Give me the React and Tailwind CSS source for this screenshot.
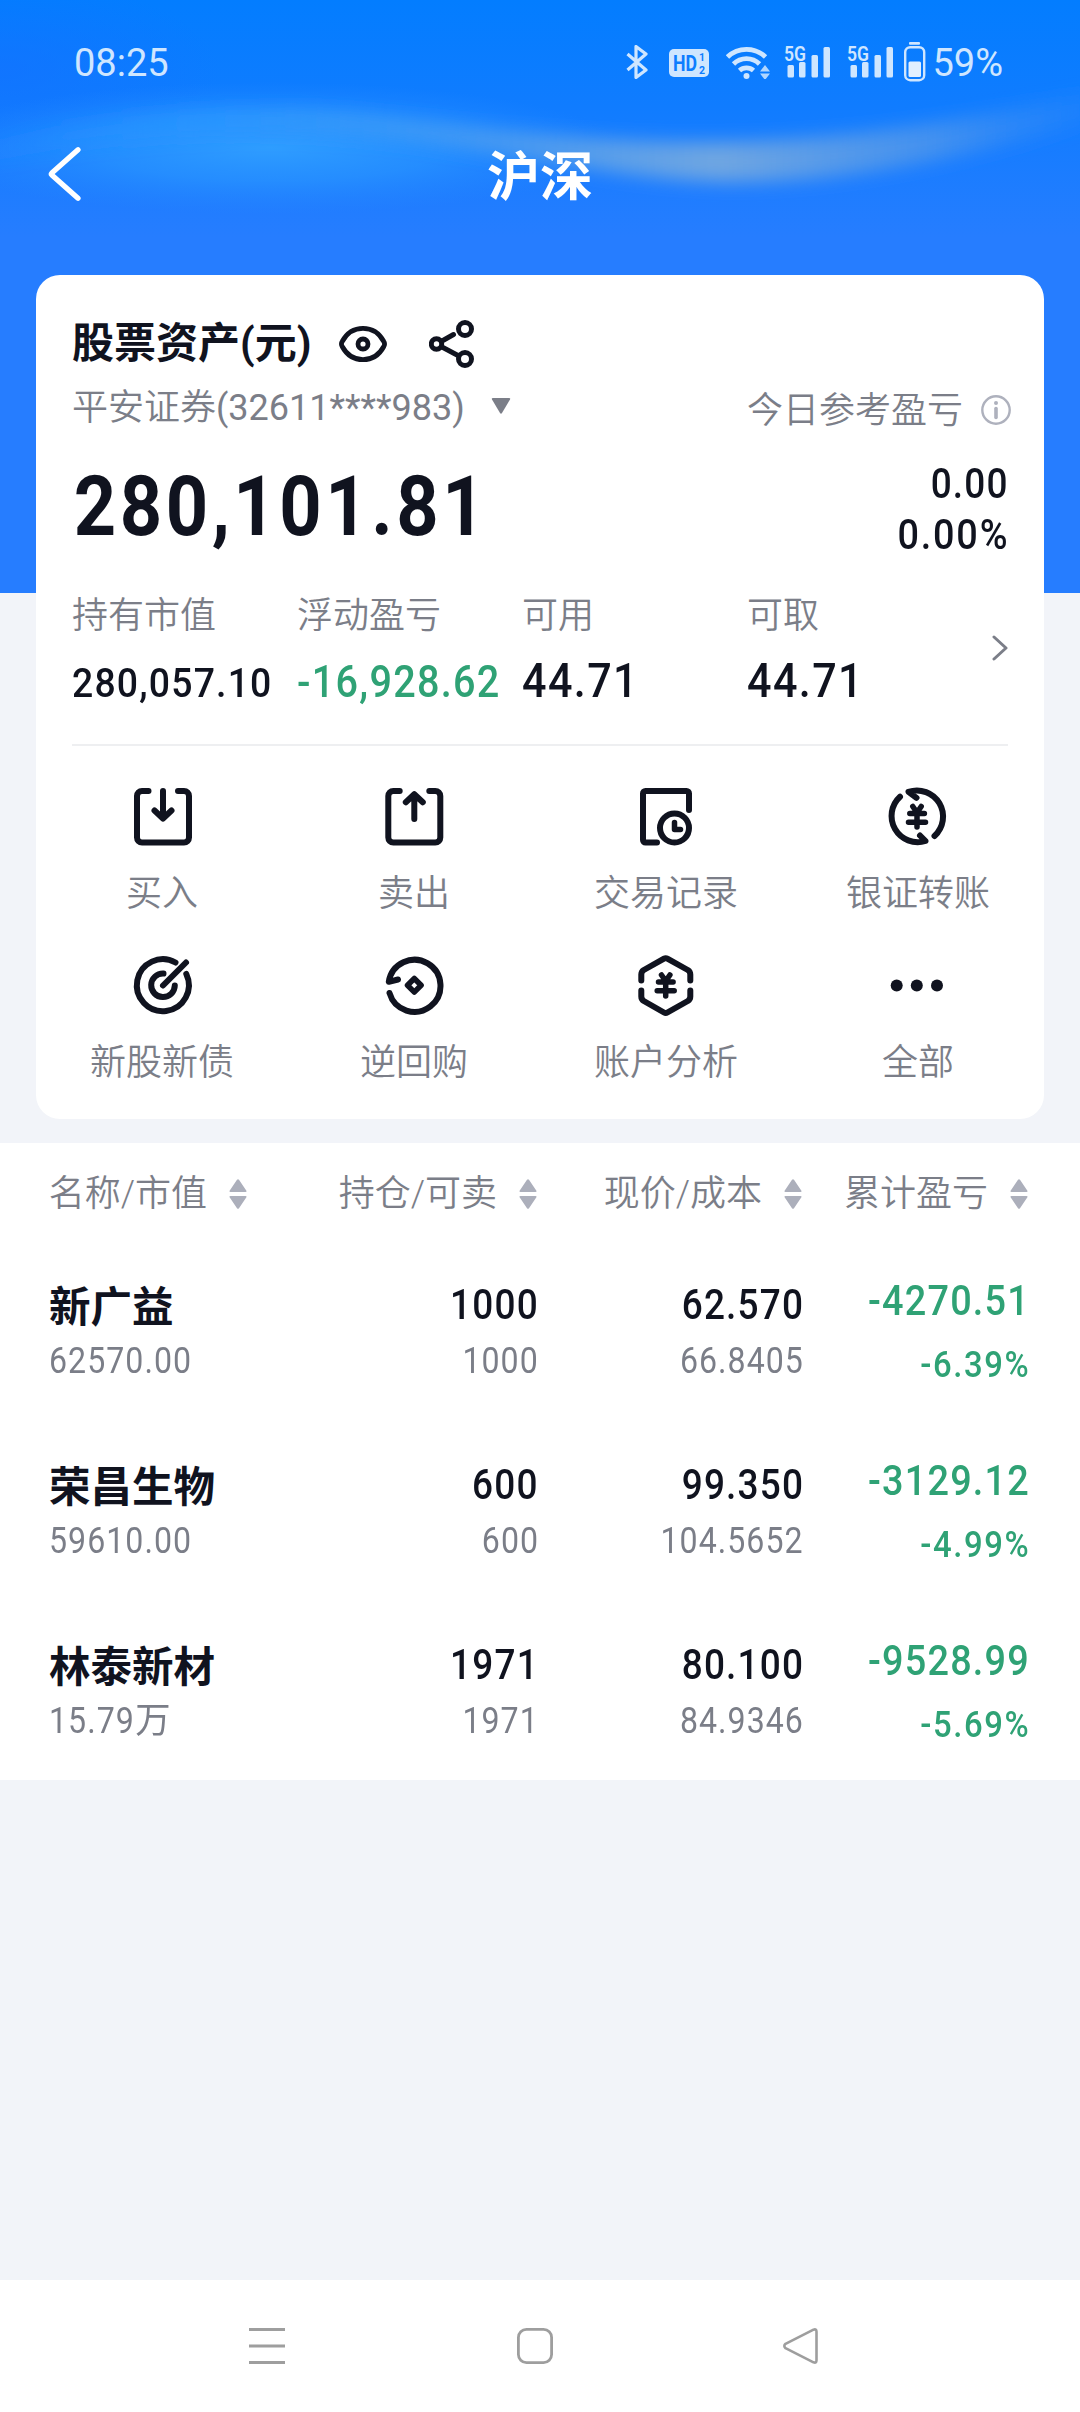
import * as React from "react";
import { clsx } from "clsx";

const accountStats = [
  { label: "持有市值", value: "280,057.10", wide: true, className: "text-[41.5px]" },
  { label: "浮动盈亏", value: "-16,928.62", wide: true, className: "text-[44px] text-[#2fa275]" },
  { label: "可用", value: "44.71", className: "text-[49px]" },
  { label: "可取", value: "44.71", className: "text-[49px]" },
];

const columns = [
  { label: "名称/市值", width: "w-[247px]" },
  { label: "持仓/可卖", width: "w-[290px]" },
  { label: "现价/成本", width: "w-[265px]" },
  { label: "累计盈亏", width: "w-[226px]" },
];

const holdings = [
  {
    name: "新广益",
    marketValue: "62570.00",
    position: "1000",
    sellable: "1000",
    price: "62.570",
    cost: "66.8405",
    profit: "-4270.51",
    rate: "-6.39%",
  },
  {
    name: "荣昌生物",
    marketValue: "59610.00",
    position: "600",
    sellable: "600",
    price: "99.350",
    cost: "104.5652",
    profit: "-3129.12",
    rate: "-4.99%",
  },
  {
    name: "林泰新材",
    marketValue: "15.79",
    unit: "万",
    position: "1971",
    sellable: "1971",
    price: "80.100",
    cost: "84.9346",
    profit: "-9528.99",
    rate: "-5.69%",
  },
];

// Condensed figures with open spacing, used for every amount
function Num({ className, align = "left", wide, loose, children }) {
  return (
    <span
      className={clsx(
        "inline-block whitespace-nowrap",
        wide ? "scale-x-[0.9]" : "scale-x-[0.88]",
        loose ? "tracking-[0.048em]" : "tracking-[0.032em]",
        align === "right" ? "origin-right" : "origin-left",
        className
      )}
    >
      {children}
    </span>
  );
}

// ---------- Action icons ----------
function ActionSvg({ children }) {
  return (
    <svg
      viewBox="0 0 60 60"
      className="size-[60px] overflow-visible"
      fill="none"
      stroke="currentColor"
      strokeWidth="6"
      strokeLinecap="round"
      strokeLinejoin="round"
    >
      {children}
    </svg>
  );
}

const BuyIcon = () => (
  <ActionSvg>
    <path d="M16.5 4H10a5 5 0 0 0-5 5v41.500a5 5 0 0 0 5 5h42a5 5 0 0 0 5-5V9a5 5 0 0 0-5-5h-6" />
    <path d="M31 4v27M22.500 23.500l8.500 8 8.500-8" />
  </ActionSvg>
);

const SellIcon = () => (
  <ActionSvg>
    <path d="M15.700 4H9.300a5 5 0 0 0-5 5v41.500a5 5 0 0 0 5 5h42a5 5 0 0 0 5-5V9a5 5 0 0 0-5-5h-6" />
    <path d="M30.300 32V7.500M21.800 15.200l8.500-8 8.500 8" />
  </ActionSvg>
);

const RecordIcon = () => (
  <ActionSvg>
    <path d="M21 55.500H9.500a2.500 2.500 0 0 1-2.500-2.500V6.500A2.500 2.500 0 0 1 9.500 4h41A2.500 2.500 0 0 1 53 6.500V23" />
    <circle cx="38.500" cy="41" r="14.500" />
    <path d="M38.500 35.500v7h6" strokeWidth="5.500" />
  </ActionSvg>
);

const TransferIcon = () => (
  <ActionSvg>
    <path d="M12 9.700A26.200 26.200 0 0 0 37.500 54L32 48.500" />
    <path d="M46.500 49A26.200 26.200 0 0 0 20.500 4.800l8 6" />
    <path d="M24.800 19.500l4.200 6 4.200-6M21.800 26.500h14.600M20.500 35.300h17M29 26v14" strokeWidth="5.500" />
  </ActionSvg>
);

const TargetIcon = () => (
  <ActionSvg>
    <path d="M43.500 6.500A26 26 0 1 0 54.300 18" />
    <path d="M31.500 17.500A11.800 11.800 0 1 0 42.800 29.500" />
    <path d="M31 29.500L54 6.500" />
  </ActionSvg>
);

const RepoIcon = () => (
  <ActionSvg>
    <path d="M14 23.500L4.800 25.800A26 26 0 1 1 5.500 37" />
    <path d="M30.300 22.500l6.800 6.800-6.800 6.800-6.800-6.800z" strokeWidth="5.500" />
  </ActionSvg>
);

const AnalysisIcon = () => (
  <ActionSvg>
    <path d="M5.300 24.500V18.500Q5.300 15.600 7.800 14L28 2.700q1.700-1 3.400 0L51.800 14q2.500 1.600 2.500 4.500v6" />
    <path d="M5.300 34.500v6q0 2.900 2.500 4.500L28 56.500q1.700 1 3.400 0L51.800 45q2.500-1.600 2.500-4.500v-6" />
    <path d="M25.500 19l4.200 6 4.200-6M22.500 26h14.600M21.200 34.700h17M29.700 26v14" strokeWidth="5.500" />
  </ActionSvg>
);

const MoreIcon = () => (
  <ActionSvg>
    <g fill="currentColor" stroke="none">
      <circle cx="8.700" cy="29.500" r="6" />
      <circle cx="28.800" cy="29.500" r="6" />
      <circle cx="49" cy="29.500" r="6" />
    </g>
  </ActionSvg>
);

const actions = [
  { label: "买入", Icon: BuyIcon },
  { label: "卖出", Icon: SellIcon },
  { label: "交易记录", Icon: RecordIcon },
  { label: "银证转账", Icon: TransferIcon },
  { label: "新股新债", Icon: TargetIcon },
  { label: "逆回购", Icon: RepoIcon },
  { label: "账户分析", Icon: AnalysisIcon },
  { label: "全部", Icon: MoreIcon },
];

// ---------- Header ----------
function HeaderBackdrop() {
  return (
    <svg
      viewBox="0 0 1080 593"
      preserveAspectRatio="none"
      className="absolute inset-0 h-full w-full"
    >
      <defs>
        <linearGradient id="sky" x1="0" y1="0" x2="0" y2="1">
          <stop offset="0" stopColor="#037dff" />
          <stop offset="0.180" stopColor="#107cff" />
          <stop offset="0.400" stopColor="#267dff" />
          <stop offset="1" stopColor="#267dff" />
        </linearGradient>
        <radialGradient id="corner">
          <stop offset="0" stopColor="#1470ff" stopOpacity="0.600" />
          <stop offset="1" stopColor="#1470ff" stopOpacity="0" />
        </radialGradient>
        <radialGradient id="glow">
          <stop offset="0" stopColor="#2f9dff" />
          <stop offset="0.500" stopColor="#2b98ff" stopOpacity="0.600" />
          <stop offset="1" stopColor="#268aff" stopOpacity="0" />
        </radialGradient>
        <linearGradient id="ribbon" x1="0" y1="0" x2="1" y2="0">
          <stop offset="0" stopColor="#2594ff" stopOpacity="0.100" />
          <stop offset="0.200" stopColor="#2d9aff" stopOpacity="0.600" />
          <stop offset="0.450" stopColor="#4d9df0" stopOpacity="0.850" />
          <stop offset="0.660" stopColor="#74a8e0" stopOpacity="0.950" />
          <stop offset="0.850" stopColor="#5298ea" stopOpacity="0.750" />
          <stop offset="1" stopColor="#328bf8" stopOpacity="0.200" />
        </linearGradient>
        <filter id="soft" x="-10%" y="-50%" width="120%" height="200%">
          <feGaussianBlur stdDeviation="9" />
        </filter>
      </defs>
      <rect width="1080" height="593" fill="url(#sky)" />
      <ellipse cx="0" cy="70" rx="220" ry="90" fill="url(#corner)" />
      <ellipse cx="270" cy="148" rx="350" ry="66" fill="url(#glow)" />
      <path
        d="M-20 145C90 112 250 102 370 116S560 137 650 141S900 140 1100 88V120C960 160 840 182 740 182S560 162 440 144S160 124-20 164Z"
        fill="url(#ribbon)"
        filter="url(#soft)"
      />
    </svg>
  );
}

function SignalIcon({ className }) {
  return (
    <svg viewBox="0 -5 46 44" className={clsx("h-[44px] w-[46px]", className)} fill="currentColor">
      <text x="0" y="15.500" fontSize="20.500" fontWeight="600" textLength="22" lengthAdjust="spacingAndGlyphs">
        5G
      </text>
      <rect x="3.500" y="20" width="6.500" height="12.500" rx="1.500" />
      <rect x="15" y="17" width="6.500" height="15.500" rx="1.500" />
      <rect x="27.500" y="10" width="6.500" height="22.500" rx="1.500" />
      <rect x="39.500" y="2" width="6.500" height="30.500" rx="1.500" />
    </svg>
  );
}

function StatusBar() {
  return (
    <div className="flex h-[124px] items-center pl-[74px] text-[38px] text-[#cfe6ff]">
      <span className="pt-0.5">08:25</span>
      <div className="ml-auto flex items-center pr-[77px]">
        <svg viewBox="0 0 22 34" className="h-[34px] w-[22px]" fill="none" stroke="currentColor" strokeWidth="3.200" strokeLinejoin="round">
          <path d="M1.500 9L20 25l-10 7.500v-31L20 9 1.500 25" />
        </svg>
        <svg viewBox="0 0 40 28" className="mt-0.5 ml-[21px] h-7 w-10">
          <rect width="40" height="28" rx="5" fill="currentColor" />
          <g fill="#0d7dff" fontWeight="700">
            <text x="4" y="22" fontSize="22.500" textLength="24" lengthAdjust="spacingAndGlyphs">HD</text>
            <text x="30" y="11.500" fontSize="10.500">1</text>
            <text x="30" y="25.300" fontSize="10.500">2</text>
          </g>
        </svg>
        <svg viewBox="0 0 46 34" className="ml-[17px] h-[34px] w-[46px]" fill="none" stroke="currentColor" strokeWidth="4.800">
          <path d="M1.500 12a27.500 27.500 0 0 1 38 0" />
          <path d="M7.500 19a18.500 18.500 0 0 1 26 0" />
          <path d="M13.500 25.500a10.500 10.500 0 0 1 14 0" />
          <circle cx="20.500" cy="31" r="3" fill="currentColor" stroke="none" />
          <path d="M34 26.500l5-6.500 5 6.500zM34 28.500l5 6.500 5-6.500z" fill="currentColor" stroke="none" opacity="0.850" />
        </svg>
        <SignalIcon className="ml-3" />
        <SignalIcon className="ml-[17px]" />
        <svg viewBox="0 0 22 40" className="ml-[11px] h-10 w-[22px]">
          <rect x="5" y="0" width="11" height="2.800" rx="1" fill="currentColor" />
          <rect x="1.200" y="5.200" width="19" height="33" rx="5" fill="none" stroke="currentColor" strokeWidth="2.400" />
          <rect x="4.500" y="19.500" width="12.500" height="15.500" rx="1.500" fill="#e2f0ff" />
        </svg>
        <span className="ml-[6px] pt-0.5">59%</span>
      </div>
    </div>
  );
}

function Header() {
  return (
    <header className="relative h-[593px] shrink-0">
      <HeaderBackdrop />
      <div className="relative">
        <StatusBar />
        <div className="grid h-[100px] grid-cols-3 items-center px-12 text-white">
          <svg viewBox="0 0 33 54" className="h-[54px] w-[33px]" fill="none" stroke="currentColor" strokeWidth="5.200" strokeLinecap="round" strokeLinejoin="round">
            <path d="M30 2.800L3.800 26q-1 1 0 2L30 51.200" />
          </svg>
          <h1 className="pt-2 text-center text-[53px] leading-none font-bold">沪深</h1>
        </div>
      </div>
    </header>
  );
}

// ---------- Asset card ----------
function AssetCard() {
  return (
    <section className="relative mx-9 -mt-[318px] h-[844px] shrink-0 rounded-[24px] bg-white pt-10">
      <div className="px-9">
        <div className="flex h-14 items-center">
          <h2 className="pt-0.5 text-[42px] leading-none font-bold">股票资产(元)</h2>
          <svg viewBox="0 0 48 36" className="mt-0.5 ml-[28px] h-9 w-12" fill="none" stroke="currentColor" strokeWidth="4.800" strokeLinejoin="round">
            <path d="M3.200 20.500q-1.500-2.500 0-5C7.500 7.500 15 2.400 24 2.400S40.500 7.500 44.800 15.500q1.500 2.500 0 5C40.500 28.500 33 33.600 24 33.600S7.500 28.500 3.200 20.500z" />
            <circle cx="24" cy="18" r="5" />
          </svg>
          <svg viewBox="0 0 46 48" className="mt-0.5 ml-[42px] h-12 w-[46px]" fill="none" stroke="currentColor" strokeWidth="5" strokeLinecap="round">
            <circle cx="36" cy="9" r="6.500" />
            <circle cx="7.500" cy="24" r="5.200" />
            <circle cx="36" cy="39" r="6.500" />
            <path d="M13 21l11.500-6.500M13 27l16 8.500" />
          </svg>
        </div>

        <div className="mt-3 flex h-12 items-center justify-between text-[36px] text-[#7b7e88]">
          <div className="flex items-center">
            <span className="pt-0.5 font-[350]">
              平安证券<span className="font-normal">(32611****983)</span>
            </span>
            <svg viewBox="0 0 20 16" className="-mt-0.5 ml-[26px] h-4 w-[20px]" fill="currentColor">
              <path d="M2 0h16q1.800 0 1 1.500L11 15q-1 1.500-2 0L1 1.500Q.2 0 2 0z" />
            </svg>
          </div>
          <div className="-mr-[3px] flex items-center pt-1.5">
            <span className="pt-0.5 font-[350]">今日参考盈亏</span>
            <svg viewBox="0 0 30 30" className="ml-[18px] size-[30px] text-[#aeb1bd]" fill="none" stroke="currentColor" strokeWidth="2.400" strokeLinecap="round">
              <circle cx="15" cy="15" r="13.700" />
              <path d="M15 13.500v9" strokeWidth="3.600" />
              <circle cx="15" cy="8" r="2" fill="currentColor" stroke="none" />
            </svg>
          </div>
        </div>

        <div className="mt-[19px] flex h-[110px] items-center justify-between">
          <Num loose className="pt-1 pl-0.5 text-[84px] leading-none font-bold">280,101.81</Num>
          <div className="-mr-px flex flex-col items-end pt-[7px] text-[42px] leading-[51px] font-medium">
            <Num align="right">0.00</Num>
            <Num align="right" wide loose>0.00%</Num>
          </div>
        </div>

        <div className="mt-8 flex h-[154px] items-start border-b-2 border-[#eeeff1]">
          {accountStats.map((stat) => (
            <div key={stat.label} className="w-[225px] shrink-0">
              <div className="text-[36px] leading-[48px] font-[350] text-[#7b7e88]">{stat.label}</div>
              <div className="mt-[11px] text-[49px] leading-[60px] font-medium whitespace-nowrap">
                <Num wide={stat.wide} className={stat.className}>{stat.value}</Num>
              </div>
            </div>
          ))}
          <svg viewBox="0 0 16 26" className="mt-[43px] ml-[20px] h-[26px] w-4 shrink-0 text-[#7b7e88]" fill="none" stroke="currentColor" strokeWidth="3" strokeLinecap="round" strokeLinejoin="round">
            <path d="M2 2l12 11L2 24" />
          </svg>
        </div>
      </div>

      <div className="mt-[41px] grid grid-cols-4">
        {actions.map(({ label, Icon }) => (
          <button key={label} type="button" className="flex h-[169px] flex-col items-center">
            <Icon />
            <span className="mt-[23px] text-[36px] leading-[48px] font-[350] text-[#7b7e88]">{label}</span>
          </button>
        ))}
      </div>
    </section>
  );
}

// ---------- Holdings ----------
function SortIcon() {
  return (
    <svg viewBox="0 0 18 30" className="h-[30px] w-[18px]" fill="#acafbb">
      <path d="M1.500 13Q0 13 .6 11.700L8 .8q1-1 2 0l7.400 10.900Q18 13 16.500 13zM1.500 17Q0 17 .6 18.300L8 29.200q1 1 2 0l7.400-10.900Q18 17 16.500 17z" />
    </svg>
  );
}

function HoldingRow({ item }) {
  return (
    <div className="flex h-[180px] text-[42px] leading-[58px] font-medium">
      <div className="w-[248px]">
        <div className="pt-1 pl-px text-[41.500px] leading-[58px] font-bold">{item.name}</div>
        <div className="-mt-1 pl-px text-[36.500px] leading-[56px] font-normal text-[#7b7e88]">
          <Num>
            {item.marketValue}
            {item.unit && <span className="inline-block origin-left scale-x-110">{item.unit}</span>}
          </Num>
        </div>
      </div>
      <div className="w-[243px] pt-px text-right">
        <Num align="right">{item.position}</Num>
        <div className="-mt-px text-[36.500px] leading-[56px] font-normal text-[#7b7e88]">
          <Num align="right">{item.sellable}</Num>
        </div>
      </div>
      <div className="w-[265px] pt-px text-right">
        <Num align="right">{item.price}</Num>
        <div className="-mt-px text-[36.500px] leading-[56px] font-normal text-[#7b7e88]">
          <Num align="right">{item.cost}</Num>
        </div>
      </div>
      <div className="-mt-[3px] w-[226px] text-right text-[#2fa275]">
        <Num align="right" wide>{item.profit}</Num>
        <div className="text-[36.500px] leading-[70px]">
          <Num align="right" wide loose>{item.rate}</Num>
        </div>
      </div>
    </div>
  );
}

function Holdings() {
  return (
    <section className="mt-6 h-[637px] shrink-0 bg-white">
      <div className="flex h-[98px] items-center pt-1">
        {columns.map((column) => (
          <div
            key={column.label}
            className={clsx(
              "flex items-center justify-end gap-[22px] text-[36px] font-[350] whitespace-nowrap text-[#7b7e88]",
              column.width
            )}
          >
            {column.label}
            <SortIcon />
          </div>
        ))}
      </div>
      <div className="pt-[34px] pl-12">
        {holdings.map((item) => (
          <HoldingRow key={item.name} item={item} />
        ))}
      </div>
    </section>
  );
}

// ---------- System navigation ----------
function NavBar() {
  return (
    <nav className="mt-auto flex h-[132px] shrink-0 items-center bg-white pl-[249px] text-[#9e9e9e]">
      <svg viewBox="0 0 36 36" className="size-9" stroke="currentColor" strokeWidth="3">
        <path d="M0 1.500h36M0 18h36M0 34.500h36" />
      </svg>
      <svg viewBox="0 0 36 36" className="ml-[232px] size-9" fill="none" stroke="currentColor" strokeWidth="2.800">
        <rect x="1.400" y="1.400" width="33.200" height="33.200" rx="8" />
      </svg>
      <svg viewBox="0 0 36 36" className="ml-[230px] size-9" fill="none" stroke="currentColor" strokeWidth="2.600" strokeLinejoin="round">
        <path d="M2.500 15.800L30.500 1.700q3-1.200 3 2v28.600q0 3.200-3 2L2.500 20.200q-2.400-2.200 0-4.400z" />
      </svg>
    </nav>
  );
}

export default function App() {
  return (
    <div className="flex h-[2412px] w-[1080px] flex-col overflow-hidden bg-[#f2f4f9] font-[Roboto,'Noto_Sans_CJK_SC',sans-serif] text-[#10131f]">
      <Header />
      <AssetCard />
      <Holdings />
      <NavBar />
    </div>
  );
}
